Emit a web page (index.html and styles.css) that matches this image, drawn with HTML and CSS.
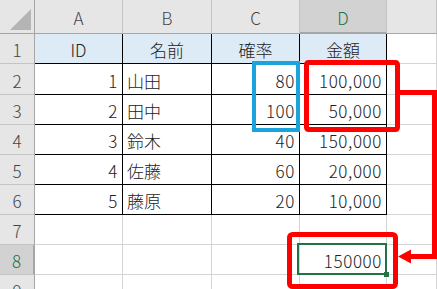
FILE: index.html
```html
<!DOCTYPE html>
<html lang="ja">
<head>
<meta charset="utf-8">
<link rel="stylesheet" href="styles.css">
</head>
<body>
<div class="sheet">
  <div class="grid">
    <div class="hd corner"><span class="tri"></span></div>
    <div class="hd col">A</div>
    <div class="hd col">B</div>
    <div class="hd col">C</div>
    <div class="hd col sel-col">D</div>
    <div class="hd col"></div>

    <div class="hd row">1</div>
    <div class="c t title ctr">ID</div>
    <div class="c t title ctr">名前</div>
    <div class="c t title ctr">確率</div>
    <div class="c t title ctr">金額</div>
    <div class="c"></div>

    <div class="hd row">2</div>
    <div class="c t num">1</div>
    <div class="c t txt">山田</div>
    <div class="c t num">80</div>
    <div class="c t num">100,000</div>
    <div class="c"></div>

    <div class="hd row">3</div>
    <div class="c t num">2</div>
    <div class="c t txt">田中</div>
    <div class="c t num">100</div>
    <div class="c t num">50,000</div>
    <div class="c"></div>

    <div class="hd row">4</div>
    <div class="c t num">3</div>
    <div class="c t txt">鈴木</div>
    <div class="c t num">40</div>
    <div class="c t num">150,000</div>
    <div class="c"></div>

    <div class="hd row">5</div>
    <div class="c t num">4</div>
    <div class="c t txt">佐藤</div>
    <div class="c t num">60</div>
    <div class="c t num">20,000</div>
    <div class="c"></div>

    <div class="hd row">6</div>
    <div class="c t num">5</div>
    <div class="c t txt">藤原</div>
    <div class="c t num">20</div>
    <div class="c t num">10,000</div>
    <div class="c"></div>

    <div class="hd row">7</div>
    <div class="c"></div>
    <div class="c"></div>
    <div class="c"></div>
    <div class="c"></div>
    <div class="c"></div>

    <div class="hd row sel-row">8</div>
    <div class="c"></div>
    <div class="c"></div>
    <div class="c"></div>
    <div class="c num active">150000<span class="handle"></span></div>
    <div class="c"></div>

    <div class="hd row">9</div>
    <div class="c"></div>
    <div class="c"></div>
    <div class="c"></div>
    <div class="c"></div>
    <div class="c"></div>
  </div>

  <svg class="marks" width="437" height="289" viewBox="0 0 437 289">
    <rect x="254" y="63" width="44" height="67" fill="none" stroke="#1ba3dc" stroke-width="4"/>
    <rect x="306.5" y="62.5" width="91" height="67" rx="2" fill="none" stroke="#ff0000" stroke-width="5"/>
    <path d="M400 92.5 H434.5 V256.5 H409" fill="none" stroke="#ff0000" stroke-width="5"/>
    <polygon points="398,256.5 411,249.5 411,263.5" fill="#ff0000"/>
    <rect x="289.5" y="234.5" width="106" height="52" rx="3" fill="none" stroke="#ff0000" stroke-width="5"/>
  </svg>
</div>
</body>
</html>
```

FILE: styles.css
```css
html, body {
  margin: 0;
  padding: 0;
  background: #ffffff;
  overflow: hidden;
}

.sheet {
  position: relative;
  width: 437px;
  height: 289px;
  overflow: hidden;
  font-family: "Noto Sans CJK JP", "Noto Sans", sans-serif;
  font-size: 17px;
  font-weight: 300;
  color: #222222;
}

.grid {
  display: grid;
  grid-template-columns: 35px 88px 89px 88px 87px 1fr;
  grid-template-rows: 34px 30px 31px repeat(7, 30px);
}

.grid > div {
  box-sizing: border-box;
  border-right: 1px solid #d4d4d4;
  border-bottom: 1px solid #d4d4d4;
  display: flex;
  align-items: center;
  white-space: nowrap;
  line-height: 1;
  padding-top: 2px;
}

.hd {
  background: #e6e6e6;
  color: #444444;
  justify-content: center;
}

.grid > .hd.col {
  border-right-color: #c4c4c4;
  border-bottom-color: #a6a6a6;
}

.grid > .hd.row {
  border-right-color: #a6a6a6;
  border-bottom-color: #c4c4c4;
}

.grid > .corner {
  position: relative;
  border-right-color: #a6a6a6;
  border-bottom-color: #a6a6a6;
}

.tri {
  position: absolute;
  right: 3px;
  bottom: 3px;
  width: 0;
  height: 0;
  border-left: 21px solid transparent;
  border-bottom: 21px solid #b4b4b4;
}

.grid > .sel-col {
  background: #d2d2d2;
  color: #217346;
  border-bottom: 2px solid #217346;
}

.grid > .sel-row {
  background: #d2d2d2;
  color: #217346;
  border-right: 2px solid #217346;
}

.grid > .t {
  border-right-color: #000000;
  border-bottom-color: #000000;
}

.title {
  background: #ddebf7;
}

.ctr {
  justify-content: center;
}

.num {
  justify-content: flex-end;
  padding-right: 4px;
  letter-spacing: 0.6px;
}

.txt {
  justify-content: flex-start;
  padding-left: 4px;
}

.active {
  position: relative;
}

.active::after {
  content: "";
  position: absolute;
  top: -2px;
  left: -3px;
  right: -1px;
  bottom: -1px;
  border: 2px solid #217346;
}

.handle {
  position: absolute;
  right: -3px;
  bottom: -3px;
  width: 5px;
  height: 5px;
  background: #217346;
  z-index: 1;
}

.marks {
  position: absolute;
  left: 0;
  top: 0;
}
```
